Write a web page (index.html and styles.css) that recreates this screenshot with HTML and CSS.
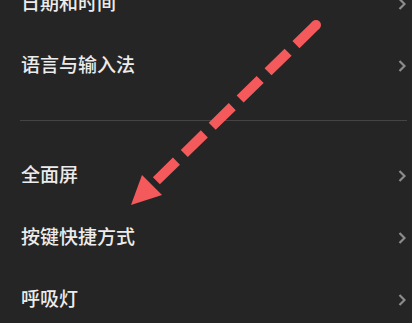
FILE: index.html
```html
<!DOCTYPE html>
<html lang="zh-CN">
<head>
    <meta charset="UTF-8">
    <meta name="viewport" content="width=device-width, initial-scale=1.0">
    <title>设置</title>
    <link rel="stylesheet" href="styles.css">
</head>
<body>
    <div class="page">
        <div class="list list-top">
            <div class="row">
                <span class="label">日期和时间</span>
                <svg class="chev" viewBox="0 0 8 12"><polyline points="1.5,1 6.5,6 1.5,11"/></svg>
            </div>
            <div class="row">
                <span class="label">语言与输入法</span>
                <svg class="chev" viewBox="0 0 8 12"><polyline points="1.5,1 6.5,6 1.5,11"/></svg>
            </div>
        </div>

        <div class="divider"></div>

        <div class="list">
            <div class="row">
                <span class="label">全面屏</span>
                <svg class="chev" viewBox="0 0 8 12"><polyline points="1.5,1 6.5,6 1.5,11"/></svg>
            </div>
            <div class="row">
                <span class="label">按键快捷方式</span>
                <svg class="chev" viewBox="0 0 8 12"><polyline points="1.5,1 6.5,6 1.5,11"/></svg>
            </div>
            <div class="row">
                <span class="label">呼吸灯</span>
                <svg class="chev" viewBox="0 0 8 12"><polyline points="1.5,1 6.5,6 1.5,11"/></svg>
            </div>
        </div>

        <!-- 指示箭头 -->
        <svg class="arrow" viewBox="0 0 412 323">
            <circle cx="316" cy="25" r="5"/>
            <line x1="316" y1="25" x2="152" y2="185"/>
            <polygon points="131,205 142,175 162,195"/>
        </svg>
    </div>
</body>
</html>
```

FILE: styles.css
```css
body {
    margin: 0;
    padding: 0;
    background-color: #252525;
    font-family: "Noto Sans CJK SC", "Noto Sans", sans-serif;
    overflow: hidden;
}
.page {
    position: relative;
    width: 412px;
    height: 323px;
    overflow: hidden;
}
.list-top {
    margin-top: -27px;
}
.row {
    display: flex;
    justify-content: space-between;
    align-items: center;
    height: 62px;
    padding: 0 6px 0 21px;
}
.label {
    color: #ececec;
    font-size: 19px;
    font-weight: 500;
    line-height: 1;
    margin-bottom: 5px;
}
.chev {
    width: 8px;
    height: 12px;
}
.chev polyline {
    fill: none;
    stroke: #8c8c8c;
    stroke-width: 2.2;
}
.divider {
    height: 1px;
    background-color: #444;
    margin: 23px 5px 24px 20px;
}
.arrow {
    position: absolute;
    top: 0;
    left: 0;
    width: 412px;
    height: 323px;
    pointer-events: none;
}
.arrow circle,
.arrow polygon {
    fill: #f45a5c;
}
.arrow line {
    stroke: #f45a5c;
    stroke-width: 10;
    stroke-dasharray: 28 11;
}
```
